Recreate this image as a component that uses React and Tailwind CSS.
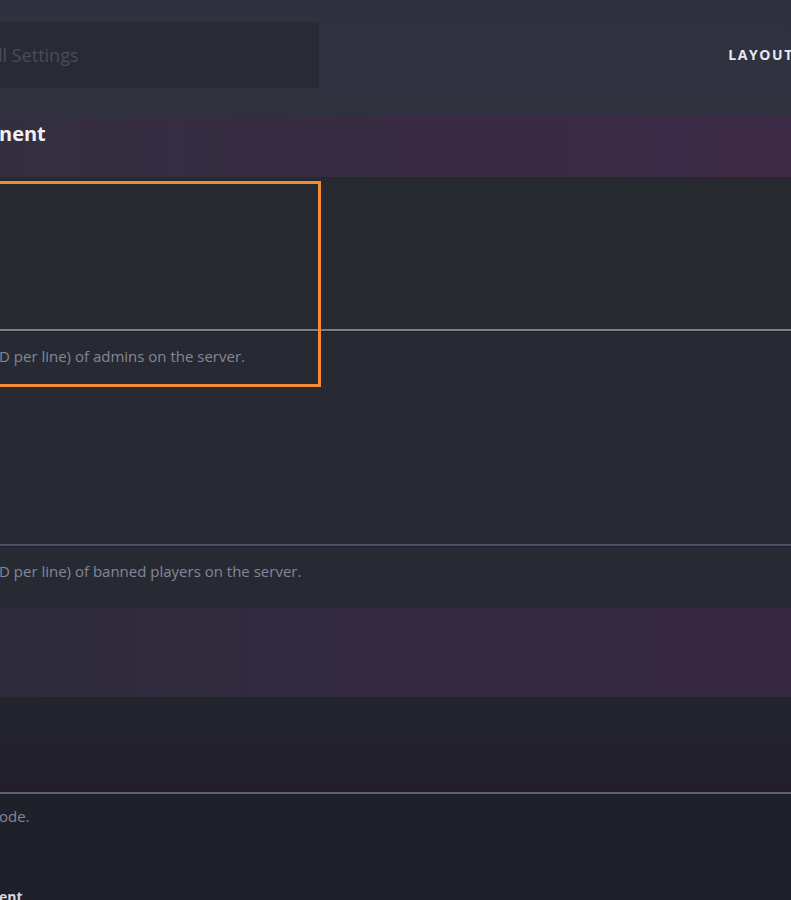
import React from "react";

function Field({ areaH, lineClass, desc, descH, areaClass = "bg-[#262930]", descClass = "", descPad = "pt-[13px]" }) {
  return (
    <div className="w-full">
      <div className={`w-full ${areaClass}`} style={{ height: areaH }} />
      <div className={`w-full h-[2px] ${lineClass}`} />
      <div className="w-full h-[1px] bg-[#1f2128]" />
      <div
        className={`w-full flex items-start ${descPad} text-[15px] text-[#82879a] whitespace-nowrap ${descClass}`}
        style={{ height: descH, fontFamily: '"Open Sans", "Noto Sans", sans-serif' }}
      >
        <span className="-ml-[1px]">{desc}</span>
      </div>
    </div>
  );
}

export default function App() {
  return (
    <div
      className="w-[791px] h-[900px] overflow-hidden bg-[#282a33] relative"
      style={{ fontFamily: '"Open Sans", "Noto Sans", sans-serif' }}
    >
      {/* Header */}
      <div className="h-[115px] bg-gradient-to-b from-[#2f323e] to-[#30333f] flex items-start justify-between">
        <div className="mt-[22px] w-[319px] h-[66px] bg-[#282b33] rounded-r-[3px] flex items-center">
          <span className="-ml-[2px] text-[18px] text-[#484d5c]">ll Settings</span>
        </div>
        <div className="mt-[44px] text-[14px] font-bold tracking-[1.6px] text-[#e8e8f0] -mr-[3px]">
          LAYOUT
        </div>
      </div>

      {/* Section band 1 */}
      <div className="h-[62px] bg-gradient-to-r from-[#332f40] via-[#382b43] to-[#3d2a46] flex items-start">
        <span className="mt-[4px] -ml-[1px] text-[20px] font-bold text-[#f0f0f5]">nent</span>
      </div>

      {/* Field 1 */}
      <Field
        areaH={152}
        lineClass="bg-[#7b7f8b]"
        desc="D per line) of admins on the server."
        descH={56}
      />

      {/* Field 2 */}
      <Field
        areaH={156}
        lineClass="bg-[#485266]"
        desc="D per line) of banned players on the server."
        descH={61}
        areaClass="bg-[#272a32]"
      />

      {/* Section band 2 */}
      <div className="h-[89px] bg-gradient-to-r from-[#2d2b3b] via-[#342a40] to-[#372842]" />

      {/* Field 3 */}
      <Field
        areaH={95}
        lineClass="bg-[#5f6371]"
        desc="ode."
        descH={60}
        descPad="pt-[10px]"
        areaClass="bg-gradient-to-b from-[#23252e] to-[#221f2a]"
        descClass="bg-[#1f212a]"
      />

      <div className="h-[37px] bg-[#1f212a]" />
      <div className="bg-[#1f212a] h-[20px] flex items-start">
        <span className="-ml-[1px] mt-[-6px] text-[14px] font-bold text-[#d8d8e0]">ent</span>
      </div>

      {/* Highlight overlay */}
      <div className="absolute left-[-10px] top-[181px] w-[331px] h-[206px] border-[3px] border-[#f28c38] pointer-events-none" />
    </div>
  );
}
